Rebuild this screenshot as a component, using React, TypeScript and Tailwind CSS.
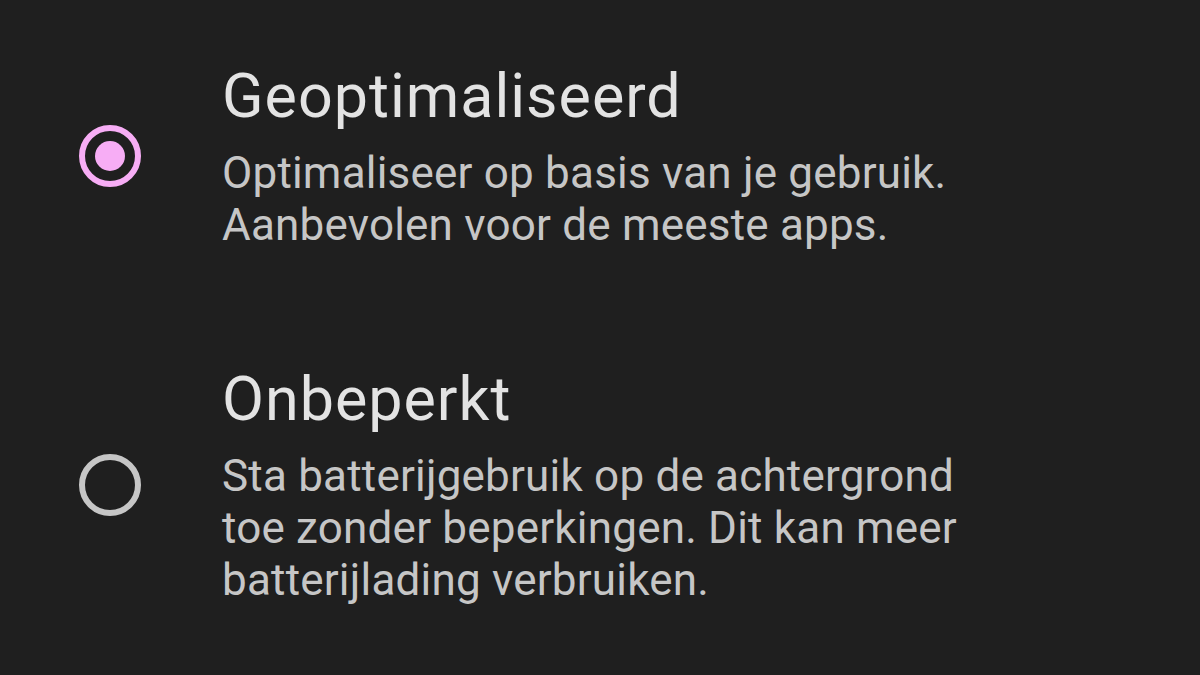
const options = [
  {
    title: 'Geoptimaliseerd',
    lines: ['Optimaliseer op basis van je gebruik.', 'Aanbevolen voor de meeste apps.'],
    checked: true,
  },
  {
    title: 'Onbeperkt',
    lines: ['Sta batterijgebruik op de achtergrond', 'toe zonder beperkingen. Dit kan meer', 'batterijlading verbruiken.'],
    checked: false,
  },
];

function Radio({ checked }: { checked: boolean }) {
  if (checked) {
    return (
      <div className="w-[62px] h-[62px] rounded-full border-[6px] border-[#f7adf5] flex items-center justify-center shrink-0">
        <div className="w-[30px] h-[30px] rounded-full bg-[#f7adf5]" />
      </div>
    );
  }
  return <div className="w-[62px] h-[62px] rounded-full border-[6px] border-[#c6c6c6] shrink-0" />;
}

export default function App() {
  return (
    <div
      className="w-[1200px] h-[675px] bg-[#1f1f1f] overflow-hidden pt-[61px]"
      style={{ fontFamily: 'Roboto, "Noto Sans", sans-serif' }}
    >
      <div className="flex flex-col gap-[113px]">
        {options.map((o) => (
          <div key={o.title} className="flex items-center">
            <div className="w-[222px] pl-[79px]">
              <Radio checked={o.checked} />
            </div>
            <div>
              <div className="text-[61px] leading-[70px] text-[#e3e3e3] tracking-[1px]">{o.title}</div>
              <div className="text-[44px] leading-[52px] text-[#c6c6c6] mt-[16px] tracking-[0.2px]">
                {o.lines.map((l) => (
                  <div key={l}>{l}</div>
                ))}
              </div>
            </div>
          </div>
        ))}
      </div>
    </div>
  );
}
